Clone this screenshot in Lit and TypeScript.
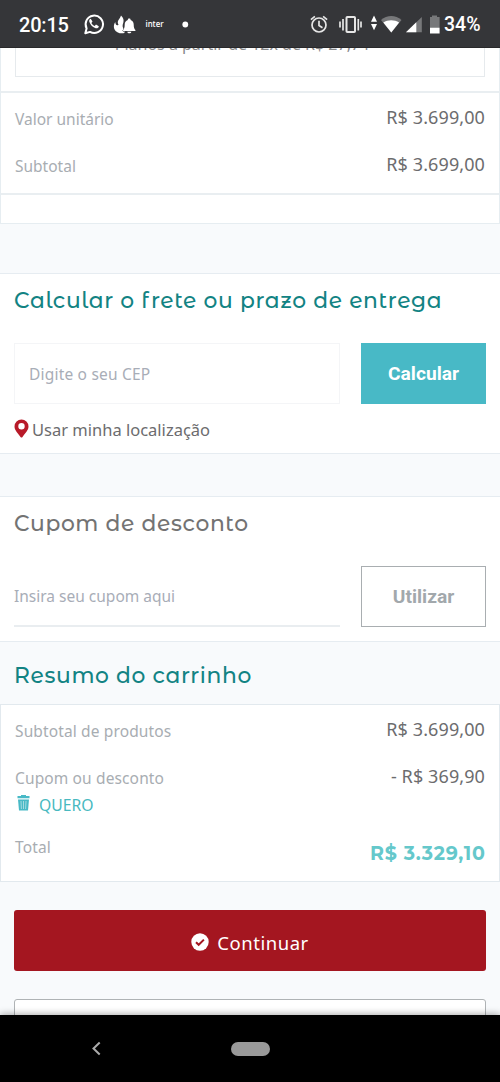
import { LitElement, html, css } from "lit";
import { customElement } from "lit/decorators.js";

@customElement("status-bar")
class StatusBar extends LitElement {
  static styles = css`
    :host { display: block; height: 48px; background: #353639; color: #fff; flex: none; position: relative; z-index: 1;
      border-bottom: 1px solid #29292b; box-sizing: border-box; }
    .bar { display: flex; align-items: center; height: 48px; font: 500 20px/48px Roboto, sans-serif; }
    .time { width: 63px; margin-left: 19px; letter-spacing: -.2px; padding-top: 2px; }
    .left { width: 220px; height: 48px; display: block; }
    .right { width: 142px; height: 48px; display: block; }
    .inter { font: 600 8px "Open Sans", sans-serif; fill: #fff; }
    .pct { padding-top: 2px; font-size: 19.500px; white-space: nowrap; }
  `;
  render() {
    return html`<div class="bar">
      <div class="time">20:15</div>
      <svg class="left" viewBox="82 0 220 48">
        <path d="M85.3 33.2 86.6 28.4A8.7 8.7 0 1 1 90 31.9Z" fill="none" stroke="#fff" stroke-width="2" stroke-linejoin="round"/>
        <path d="M90.7 18.7c-1.4.4-1.8 1.9-1.3 3.3 1 3 3.4 5.300 6.300 6.200 1.500.4 3-.4 3.100-2l-2.800-1.600-1.300 1.400c-1.500-.6-2.600-1.700-3.300-3.100l1.100-1.400Z" fill="#fff"/>
        <path d="M121 15.500c2.500 2.200 3 4.700 2.300 7.300-1 2.500-1.200 5.500 2 7.300l-1 3c-4 .8-8.500-.6-10-4.200-.9-2.300-.3-4.800 1-6.800 0 2.500 1.500 4 3.200 2.600-2.200-4 1.500-5.500 2.500-9.200Z" fill="#fff"/>
        <path d="M129.200 18.600c.9 0 1.400.5 1.400 1.400 2.100.7 3.100 2.500 3.100 4.600 0 3.200.7 4.400 1.700 5.500v1h-12.300v-1c1-1.100 1.600-2.300 1.600-5.500 0-2.100 1.100-3.900 3.100-4.600 0-.9.500-1.400 1.400-1.400Z" fill="#fff" stroke="#353639" stroke-width="1" paint-order="stroke"/>
        <path d="M127.300 31.700h4c-.2 2.100-3.800 2.100-4 0Z" fill="#fff"/>
        <text class="inter" x="145.500" y="27" textLength="18" lengthAdjust="spacingAndGlyphs">inter</text>
        <circle cx="185.300" cy="24.500" r="2.900" fill="#fff"/>
      </svg>
      <svg class="right" viewBox="302 0 142 48">
        <g fill="none" stroke="#e6e6e6" stroke-width="1.700">
          <circle cx="319" cy="25" r="7"/>
          <path d="M319 20.700v4.800l3.500 2.200M310.900 19.700l4-3.300M327.100 19.700l-4-3.300"/>
          <rect x="346.500" y="17" width="8.500" height="15" rx=".8" stroke-width="2"/>
          <path d="M343 19v11.500M340 21.500v6M358.300 19v11.500M361 21.500v6" stroke-width="1.700"/>
        </g>
        <path d="M374 15.500l3 6.200h-6ZM374 30.300l3-6.200h-6Z" fill="#fff"/>
        <path d="M381 20c6-5.300 14.500-5.300 20.500 0L391.300 32.400Z" fill="#77787a"/>
        <path d="M383.300 22.500c4.500-3 11.300-3 15.800 0l-7.800 9.900Z" fill="#fff"/>
        <path d="M421.800 17v15.300H406Z" fill="#77787a"/><path d="M416.300 22.300v10H406Z" fill="#fff"/>
        <path d="M430 17h2v-1.500h5V17h2.600v10H430Z" fill="#77787a"/><path d="M430 27.500h9.600v6H430Z" fill="#fff"/>
      </svg>
      <span class="pct">34%</span>
    </div>`;
  }
}

@customElement("app-root")
class AppRoot extends LitElement {
  static styles = css`
    :host { display: flex; flex-direction: column; width: 500px; height: 1082px; overflow: hidden;
      background: #f8fafc; font: 16px "Noto Sans", sans-serif; color: #6c6c6e; }
    * { box-sizing: border-box; }
    .page { height: 967px; flex: none; display: flex; flex-direction: column; }
    .product { height: 176px; flex: none; background: #fff; border: 1px solid #e6edf1; border-top: 0; }
    .plans { display: flow-root; height: 29px; margin: 0 14px; border: 1.500px solid #e6eaed; border-top: 0; text-align: center; }
    .plans span { display: block; margin-top: -15px; padding-right: 16px; line-height: 22px; font-size: 16px; color: #87888a; white-space: nowrap; }
    .values { height: 104px; margin-top: 14px; border: solid #e9eef1; border-width: 2px 0; padding: 2px 14px 0; }
    .row { display: flex; justify-content: space-between; height: 47px; line-height: 47px; }
    .label { color: #a8adb2; font-size: 15.500px; line-height: 49px; white-space: nowrap; }
    .amount { font-size: 18px; margin-top: -1px; white-space: nowrap; letter-spacing: .1px; }
    h2 { margin: 0; font: 500 21.800px/30px "Montserrat Alternates", Montserrat, "DejaVu Sans", sans-serif; color: #128383; white-space: nowrap;
      letter-spacing: .63px; }
    .panel { flex: none; background: #fff; border: solid #e6ecf1; border-width: 1.500px 0; padding: 0 14px; }
    .freight { height: 181px; margin-top: 49px; padding-top: 11px; }
    .form { display: flex; justify-content: space-between; }
    .freight .form { margin-top: 28px; }
    .field { width: 326px; height: 61px; line-height: 61px; border: 1px solid #f4f5f7; padding-left: 14px; color: #a8adb7; font-size: 15.500px; }
    .freight .field { letter-spacing: .2px; }
    .btn { width: 125px; height: 61px; font: 700 19.200px/61px Roboto, sans-serif; text-align: center; color: #fff; background: #48b9c6; }
    .loc { display: flex; align-items: center; height: 24px; margin-top: 13px; font-size: 16.500px; }
    .loc svg { width: 15px; height: 19px; margin-right: 3px; margin-top: -2px; }
    .coupon { height: 146px; margin-top: 42px; padding-top: 11px; }
    .coupon h2 { color: #737373; }
    .coupon .form { margin-top: 28px; }
    .coupon .field { border: 0; border-bottom: 2px solid #e9edf0; padding-left: 0; }
    .coupon .btn { background: #fff; color: #a2a8ac; border: 1.500px solid #a9aeb1; line-height: 59px; }
    .sum-title { margin: 18px 14px 14px; }
    .summary { flex: none; height: 178px; background: #fff; border: 1px solid #e2e9ee; padding: 2px 14px; }
    .summary .label { letter-spacing: .13px; }
    .code { display: flex; align-items: center; height: 24px; margin-top: -8px; color: #48b9c0; font-size: 15.700px; }
    .code svg { width: 13px; height: 16px; margin: -4px 9px 0 2px; }
    .total { margin-top: 7px; }
    .total .label { line-height: 47px; }
    .price { font: 700 19px/47px Montserrat, Lato, sans-serif; color: #65c8cb; margin-top: 6px; white-space: nowrap;
      letter-spacing: .8px; margin-right: -.8px; }
    .go { flex: none; height: 61px; margin: 28px 14px 0; border-radius: 3px; background: #a41620; color: #fff;
      display: flex; align-items: center; justify-content: center; font-size: 18.500px; letter-spacing: .55px; gap: 8px; padding-top: 3px; }
    .go svg { width: 18px; height: 18px; }
    .next { flex: none; height: 60px; margin: 28px 14px 0; border: 1.500px solid #afb3b5; border-radius: 3px;
      background: #fff; }
    .nav { flex: none; height: 67px; background: #000; display: flex; align-items: center; box-shadow: 0 -1px 7px #0005; z-index: 1; }
    .nav svg { width: 10px; height: 15px; margin-left: 91px; }
    .pill { width: 39px; height: 14px; border-radius: 7px; background: #999; margin-left: 130px; }
  `;
  render() {
    const row = (label: string, amount: string) =>
      html`<div class="row"><span class="label">${label}</span><span class="amount">${amount}</span></div>`;
    return html`
      <status-bar></status-bar>
      <main class="page">
        <section class="product">
          <div class="plans"><span>Planos a partir de 12x de R$ 27,74</span></div>
          <div class="values">${row("Valor unitário", "R$ 3.699,00")}${row("Subtotal", "R$ 3.699,00")}</div>
        </section>
        <section class="panel freight">
          <h2>Calcular o frete ou prazo de entrega</h2>
          <div class="form"><div class="field">Digite o seu CEP</div><div class="btn">Calcular</div></div>
          <div class="loc"><svg viewBox="0 0 15 19"><path fill="#b81a29" fill-rule="evenodd" d="M7.500.5a7 7 0 0 0-7 7c0 3.500 2.500 5.500 6 10.500q1 1.200 2 0c3.500-5 6-7 6-10.500a7 7 0 0 0-7-7Zm0 3.500a3.200 3.200 0 1 1 0 6.400 3.200 3.200 0 0 1 0-6.400Z"/></svg><span>Usar minha localização</span></div>
        </section>
        <section class="panel coupon">
          <h2>Cupom de desconto</h2>
          <div class="form"><div class="field">Insira seu cupom aqui</div><div class="btn">Utilizar</div></div>
        </section>
        <h2 class="sum-title">Resumo do carrinho</h2>
        <section class="summary">
          ${row("Subtotal de produtos", "R$ 3.699,00")}
          ${row("Cupom ou desconto", "- R$ 369,90")}
          <div class="code"><svg viewBox="0 0 13 16"><path fill="#48b9c6" d="M4 0h5v1h3.500v2.300H.5V1H4Z"/><path fill="#48b9c6" d="M1 4.500h11L11 15.500H2Z"/><path stroke="#a5dbe0" d="M4 6l.4 8M6.500 6v8M9 6l-.4 8"/></svg><span>QUERO</span></div>
          <div class="row total"><span class="label">Total</span><span class="price">R$ 3.329,10</span></div>
        </section>
        <div class="go"><svg viewBox="0 0 18 18"><circle cx="9" cy="9" r="8.700" fill="#fff"/><path d="M5 9.200l2.700 2.600 5.200-5.200" fill="none" stroke="#a41620" stroke-width="2"/></svg><span>Continuar</span></div>
        <div class="next"></div>
      </main>
      <nav class="nav"><svg viewBox="0 0 10 15"><path d="M8.700 1.500 2.500 7.500l6.200 6" fill="none" stroke="#aaa" stroke-width="2"/></svg><span class="pill"></span></nav>
    `;
  }
}
